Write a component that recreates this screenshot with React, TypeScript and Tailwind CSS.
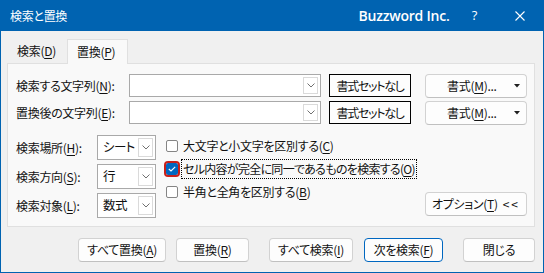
import React from "react";

const Chev = () => (
  <svg width="8" height="5" viewBox="0 0 8 5">
    <path d="M0.5 0.5 L4 4 L7.5 0.5" fill="none" stroke="#707070" strokeWidth="1" />
  </svg>
);

const Tri = () => (
  <svg width="6" height="4" viewBox="0 0 6 4">
    <path d="M0 0 L6 0 L3 3.5 Z" fill="#202020" />
  </svg>
);

const U = ({ c }: { c: string }) => (
  <>
    (<span className="underline underline-offset-2">{c}</span>)
  </>
);

const Combo = ({ w, h, text }: { w: string; h: string; text?: string }) => (
  <div className={`${w} ${h} bg-white border border-[#a9a9a9] flex items-stretch p-[2px]`}>
    <div className="flex-1 flex items-center pl-[3px] text-[12.5px] tracking-[-0.6px] whitespace-nowrap overflow-hidden">{text}</div>
    <div className="w-[15px] border border-[#dadada] flex items-center justify-center shrink-0">
      <Chev />
    </div>
  </div>
);

const Btn = ({ className, children }: { className: string; children: React.ReactNode }) => (
  <div
    className={`h-[24px] rounded-[4px] border border-[#d2d2d2] border-b-[#c0c0c0] bg-[#fdfdfd] flex items-center justify-center whitespace-nowrap ${className}`}
  >
    {children}
  </div>
);

const Check = ({ checked, children }: { checked?: boolean; children: React.ReactNode }) => (
  <div className="h-[23px] flex items-center whitespace-nowrap">
    {checked ? (
      <div className="w-[12px] h-[12px] shrink-0 rounded-[2px] bg-[#0067c0] outline-2 outline-solid outline-[#c8211b] flex items-center justify-center">
        <svg width="8" height="6" viewBox="0 0 8 6">
          <path d="M0.8 3 L3 5 L7.2 0.8" fill="none" stroke="white" strokeWidth="1.1" />
        </svg>
      </div>
    ) : (
      <div className="w-[12px] h-[12px] shrink-0 rounded-[2px] bg-white border border-[#858585]" />
    )}
    <div className="ml-[5px]">{children}</div>
  </div>
);

export default function App() {
  return (
    <div className="w-[544px] h-[273px] flex flex-col font-['Noto_Sans_CJK_JP','Noto_Sans',sans-serif] [font-feature-settings:'palt'] text-[12px] tracking-[-0.3px] text-[#111] leading-none whitespace-nowrap">
      <div className="h-[31px] shrink-0 bg-[#0063b1] flex items-center text-white">
        <span className="ml-[10px] text-[12px]">検索と置換</span>
        <span className="ml-auto font-['Open_Sans',sans-serif] font-semibold text-[14px] tracking-[-0.2px]">
          Buzzword Inc.
        </span>
        <span className="ml-[22px] font-['Open_Sans',sans-serif] text-[13px]">?</span>
        <svg className="ml-[38px] mr-[19px]" width="10" height="10" viewBox="0 0 10 10">
          <path d="M0.5 0.5 L9.5 9.5 M9.5 0.5 L0.5 9.5" stroke="white" strokeWidth="1.1" />
        </svg>
      </div>
      <div className="flex-1 bg-[#f0f0f0] border-x border-b border-[#0063b1] flex flex-col">
        <div className="mt-[8px] ml-[6px] flex h-[25px]">
          <div className="w-[60px] h-[24px] flex items-center pl-[10px]">
            検索<U c="D" />
          </div>
          <div className="relative z-10 w-[61px] h-[25px] bg-[#f9f9f9] border-t border-x border-[#e0e0e0] flex items-center pl-[9px] pb-[1px]">
            置換<U c="P" />
          </div>
        </div>
        <div className="-mt-[1px] ml-[6px] w-[528px] h-[164px] bg-[#f9f9f9] border border-[#e0e0e0] pt-[10px] pl-[8px] pr-[7px] flex flex-col">
          {[
            ["検索する文字列", "N"],
            ["置換後の文字列", "E"],
          ].map(([t, k], i) => (
            <div key={k} className={`${i ? "mt-[4px]" : ""} flex items-center h-[23px]`}>
              <div className="w-[113px]">
                {t}
                <U c={k} />:
              </div>
              <Combo w="w-[192px]" h="h-[23px]" />
              <div className="ml-[8px] w-[82px] h-[23px] border border-black bg-[#fdfdfd] flex items-center justify-center tracking-[-1.3px]">
                書式セットなし
              </div>
              <Btn className="ml-[14px] w-[102px] h-[23px] !justify-start pl-[21px] pr-[6px]">
                <span>
                  書式<U c="M" />...
                </span>
                <span className="ml-auto">
                  <Tri />
                </span>
              </Btn>
            </div>
          ))}
          <div className="mt-[11px] flex">
            <div className="flex flex-col gap-[4px]">
              {[
                ["検索場所", "H", "シート"],
                ["検索方向", "S", "行"],
                ["検索対象", "L", "数式"],
              ].map(([t, k, v]) => (
                <div key={k} className="flex items-center">
                  <div className="w-[81px]">
                    {t}
                    <U c={k} />:
                  </div>
                  <Combo w="w-[59px]" h="h-[25px]" text={v} />
                </div>
              ))}
            </div>
            <div className="ml-[10px] -mt-[1px] flex flex-col">
              <Check>
                大文字と小文字を区別する<U c="C" />
              </Check>
              <Check checked>
                <span className="-ml-[2px] px-[1px] py-[3px] border border-dotted border-black inline-block tracking-[-0.7px]">
                  セル内容が完全に同一であるものを検索する<U c="O" />
                </span>
              </Check>
              <Check>
                半角と全角を区別する<U c="B" />
              </Check>
            </div>
            <Btn className="ml-auto self-end mb-[2px] w-[102px]">
              オプション<U c="T" />
              <span className="ml-[5px] tracking-[2px]">&lt;&lt;</span>
            </Btn>
          </div>
        </div>
        <div className="mt-[11px] flex">
          <Btn className="ml-[77px] w-[88px]">
            すべて置換<U c="A" />
          </Btn>
          <Btn className="ml-[10px] w-[73px]">
            置換<U c="R" />
          </Btn>
          <Btn className="ml-[20px] w-[84px]">
            すべて検索<U c="I" />
          </Btn>
          <Btn className="ml-[11px] w-[79px] !border-[#0067c0]">
            次を検索<U c="F" />
          </Btn>
          <Btn className="ml-[20px] w-[72px]">閉じる</Btn>
        </div>
      </div>
    </div>
  );
}
